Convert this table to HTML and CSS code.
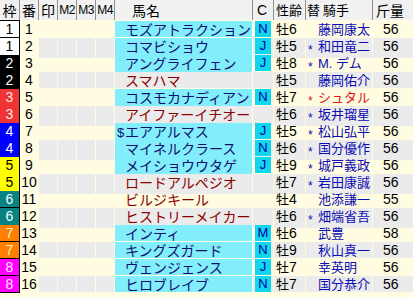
FILE: index.html
```html
<!DOCTYPE html>
<html lang="ja">
<head>
<meta charset="utf-8">
<title>出馬表</title>
<link rel="stylesheet" href="styles.css">
</head>
<body>
<div class="sheet">
  <div class="head">
    <div class="h">枠</div>
    <div class="h">番</div>
    <div class="h">印</div>
    <div class="h m">M2</div>
    <div class="h m">M3</div>
    <div class="h m">M4</div>
    <div class="h h-name">馬名</div>
    <div class="h h-c">C</div>
    <div class="h h-sex">性齢</div>
    <div class="h h-jk">替 騎手</div>
    <div class="h h-wt">斤量</div>
  </div>
  <div class="body">
    <div class="row odd first">
      <div class="waku w1">1</div><div class="num">1</div>
      <div class="mk"></div><div class="mk"></div><div class="mk"></div><div class="mk"></div>
      <div class="name cyan"><span class="pre"></span>モズアトラクション</div>
      <div class="c"><span class="badge">N</span></div>
      <div class="sex">牡<span class="d">6</span></div>
      <div class="jk"><span class="pre"></span>藤岡康太</div>
      <div class="wt">56</div>
    </div>
    <div class="row even">
      <div class="waku w1">1</div><div class="num">2</div>
      <div class="mk"></div><div class="mk"></div><div class="mk"></div><div class="mk"></div>
      <div class="name cyan"><span class="pre"></span>コマビショウ</div>
      <div class="c"><span class="badge">J</span></div>
      <div class="sex">牡<span class="d">5</span></div>
      <div class="jk"><span class="pre">*</span>和田竜二</div>
      <div class="wt">56</div>
    </div>
    <div class="row odd">
      <div class="waku w2">2</div><div class="num">3</div>
      <div class="mk"></div><div class="mk"></div><div class="mk"></div><div class="mk"></div>
      <div class="name cyan"><span class="pre"></span>アングライフェン</div>
      <div class="c"><span class="badge">J</span></div>
      <div class="sex">牡<span class="d">8</span></div>
      <div class="jk"><span class="pre">*</span><span class="lat">M. </span>デム</div>
      <div class="wt">56</div>
    </div>
    <div class="row even">
      <div class="waku w2">2</div><div class="num">4</div>
      <div class="mk"></div><div class="mk"></div><div class="mk"></div><div class="mk"></div>
      <div class="name red"><span class="pre"></span>スマハマ</div>
      <div class="c"></div>
      <div class="sex">牡<span class="d">5</span></div>
      <div class="jk"><span class="pre"></span>藤岡佑介</div>
      <div class="wt">56</div>
    </div>
    <div class="row odd">
      <div class="waku w3">3</div><div class="num">5</div>
      <div class="mk"></div><div class="mk"></div><div class="mk"></div><div class="mk"></div>
      <div class="name cyan"><span class="pre"></span>コスモカナディアン</div>
      <div class="c"><span class="badge">N</span></div>
      <div class="sex">牡<span class="d">7</span></div>
      <div class="jk alert"><span class="pre">*</span>シュタル</div>
      <div class="wt">56</div>
    </div>
    <div class="row even">
      <div class="waku w3">3</div><div class="num">6</div>
      <div class="mk"></div><div class="mk"></div><div class="mk"></div><div class="mk"></div>
      <div class="name red"><span class="pre"></span>アイファーイチオー</div>
      <div class="c"></div>
      <div class="sex">牡<span class="d">6</span></div>
      <div class="jk"><span class="pre">*</span>坂井瑠星</div>
      <div class="wt">56</div>
    </div>
    <div class="row odd">
      <div class="waku w4">4</div><div class="num">7</div>
      <div class="mk"></div><div class="mk"></div><div class="mk"></div><div class="mk"></div>
      <div class="name cyan"><span class="pre">$</span>エアアルマス</div>
      <div class="c"><span class="badge">J</span></div>
      <div class="sex">牡<span class="d">5</span></div>
      <div class="jk"><span class="pre">*</span>松山弘平</div>
      <div class="wt">56</div>
    </div>
    <div class="row even">
      <div class="waku w4">4</div><div class="num">8</div>
      <div class="mk"></div><div class="mk"></div><div class="mk"></div><div class="mk"></div>
      <div class="name cyan"><span class="pre"></span>マイネルクラース</div>
      <div class="c"><span class="badge">N</span></div>
      <div class="sex">牡<span class="d">6</span></div>
      <div class="jk"><span class="pre">*</span>国分優作</div>
      <div class="wt">56</div>
    </div>
    <div class="row odd">
      <div class="waku w5">5</div><div class="num">9</div>
      <div class="mk"></div><div class="mk"></div><div class="mk"></div><div class="mk"></div>
      <div class="name cyan"><span class="pre"></span>メイショウウタゲ</div>
      <div class="c"><span class="badge">J</span></div>
      <div class="sex">牡<span class="d">9</span></div>
      <div class="jk"><span class="pre">*</span>城戸義政</div>
      <div class="wt">56</div>
    </div>
    <div class="row even">
      <div class="waku w5">5</div><div class="num">10</div>
      <div class="mk"></div><div class="mk"></div><div class="mk"></div><div class="mk"></div>
      <div class="name red"><span class="pre"></span>ロードアルペジオ</div>
      <div class="c"></div>
      <div class="sex">牡<span class="d">7</span></div>
      <div class="jk"><span class="pre">*</span>岩田康誠</div>
      <div class="wt">56</div>
    </div>
    <div class="row odd">
      <div class="waku w6">6</div><div class="num">11</div>
      <div class="mk"></div><div class="mk"></div><div class="mk"></div><div class="mk"></div>
      <div class="name red"><span class="pre"></span>ビルジキール</div>
      <div class="c"></div>
      <div class="sex">牡<span class="d">4</span></div>
      <div class="jk"><span class="pre"></span>池添謙一</div>
      <div class="wt">55</div>
    </div>
    <div class="row even">
      <div class="waku w6">6</div><div class="num">12</div>
      <div class="mk"></div><div class="mk"></div><div class="mk"></div><div class="mk"></div>
      <div class="name red"><span class="pre"></span>ヒストリーメイカー</div>
      <div class="c"></div>
      <div class="sex">牡<span class="d">6</span></div>
      <div class="jk"><span class="pre">*</span>畑端省吾</div>
      <div class="wt">56</div>
    </div>
    <div class="row odd">
      <div class="waku w7">7</div><div class="num">13</div>
      <div class="mk"></div><div class="mk"></div><div class="mk"></div><div class="mk"></div>
      <div class="name cyan"><span class="pre"></span>インティ</div>
      <div class="c"><span class="badge">M</span></div>
      <div class="sex">牡<span class="d">6</span></div>
      <div class="jk"><span class="pre"></span>武豊</div>
      <div class="wt">58</div>
    </div>
    <div class="row even">
      <div class="waku w7">7</div><div class="num">14</div>
      <div class="mk"></div><div class="mk"></div><div class="mk"></div><div class="mk"></div>
      <div class="name cyan"><span class="pre"></span>キングズガード</div>
      <div class="c"><span class="badge">N</span></div>
      <div class="sex">牡<span class="d">9</span></div>
      <div class="jk"><span class="pre"></span>秋山真一</div>
      <div class="wt">56</div>
    </div>
    <div class="row odd">
      <div class="waku w8">8</div><div class="num">15</div>
      <div class="mk"></div><div class="mk"></div><div class="mk"></div><div class="mk"></div>
      <div class="name cyan"><span class="pre"></span>ヴェンジェンス</div>
      <div class="c"><span class="badge">J</span></div>
      <div class="sex">牡<span class="d">7</span></div>
      <div class="jk"><span class="pre"></span>幸英明</div>
      <div class="wt">56</div>
    </div>
    <div class="row even">
      <div class="waku w8">8</div><div class="num">16</div>
      <div class="mk"></div><div class="mk"></div><div class="mk"></div><div class="mk"></div>
      <div class="name cyan"><span class="pre"></span>ヒロブレイブ</div>
      <div class="c"><span class="badge">N</span></div>
      <div class="sex">牡<span class="d">7</span></div>
      <div class="jk"><span class="pre"></span>国分恭介</div>
      <div class="wt">56</div>
    </div>
  </div>
</div>
</body>
</html>
```
FILE: styles.css
```css
html, body {
  margin: 0;
  padding: 0;
}
body {
  background: #fffce1;
  width: 413px;
  height: 297px;
  overflow: hidden;
  font-family: "Noto Sans CJK JP", sans-serif;
  color: #000;
}
.sheet {
  width: 413px;
}
.head,
.row {
  display: grid;
  grid-template-columns: 19px 18px 18px 18px 18px 18px 137px 20px 31px 66px 40px;
  column-gap: 1px;
}
.head {
  height: 20px;
  background: #8e8e8e;
}
.h {
  background: #f1f1f1;
  font-size: 14px;
  line-height: 20px;
  text-align: center;
  white-space: nowrap;
}
.h.m {
  font-family: "Liberation Sans Narrow", "Liberation Sans", sans-serif;
  font-size: 12px;
  letter-spacing: -0.5px;
}
.h-name {
  text-align: left;
  padding-left: 17px;
}
.h-c {
  font-family: "Liberation Sans", sans-serif;
  font-size: 14px;
  text-align: left;
  padding-left: 4px;
}
.h-sex {
  text-align: left;
  padding-left: 2px;
  font-size: 13px;
}
.h-jk {
  text-align: left;
  padding-left: 1px;
  font-size: 13px;
}
.h-wt {
  text-align: left;
  padding-left: 3px;
}
.body {
  display: grid;
  row-gap: 1px;
  padding-top: 1px;
}
.row {
  height: 16px;
  line-height: 16px;
  white-space: nowrap;
}
.waku {
  text-align: center;
  font-family: "Liberation Sans Narrow", "Liberation Sans", sans-serif;
  font-size: 14px;
  box-shadow: 1px 0 0 #000, 0 1px 0 #000, 1px 1px 0 #000;
}
.first .waku {
  box-shadow: 1px 0 0 #000, 0 1px 0 #000, 1px 1px 0 #000, 0 -1px 0 #000, 1px -1px 0 #000;
}
.w1 { background: #ffffff; color: #000; }
.w2 { background: #000000; color: #fff; }
.w3 { background: #f03434; color: #ffe4e4; }
.w4 { background: #0000ff; color: #fff; }
.w5 { background: #ffff00; color: #000; }
.w6 { background: #0a8282; color: #e6ffff; }
.w7 { background: #ff8000; color: #fff4c8; }
.w8 { background: #ff00ff; color: #ffe6ff; }
.num {
  text-align: center;
  font-family: "Liberation Sans Narrow", "Liberation Sans", sans-serif;
  font-size: 14px;
}
.name {
  font-size: 14px;
  padding-left: 2px;
}
.name .pre {
  display: inline-block;
  width: 8px;
  font-family: "Liberation Sans", sans-serif;
  font-size: 13px;
}
.name.cyan {
  background: #82eefb;
  color: #101070;
}
.name.red {
  color: #8c0000;
}
.c {
  padding-left: 2px;
}
.badge {
  display: block;
  width: 16px;
  height: 16px;
  background: #12d6ee;
  color: #0000a0;
  text-align: center;
  font-family: "Liberation Sans", sans-serif;
  font-size: 13px;
}
.sex {
  padding-left: 2px;
  font-size: 13px;
}
.sex .d,
.wt {
  font-family: "Liberation Sans Narrow", "Liberation Sans", sans-serif;
  font-size: 14px;
}
.jk {
  padding-left: 2px;
  font-size: 13px;
  color: #0c0cb4;
}
.jk .pre {
  display: inline-block;
  width: 10px;
  font-family: "Liberation Sans", sans-serif;
  font-size: 12px;
  vertical-align: -3px;
}
.jk .lat {
  font-family: "Liberation Sans", sans-serif;
  font-size: 13px;
  white-space: pre;
}
.jk.alert {
  color: #e01414;
}
.wt {
  padding-left: 10px;
}
.even .mk,
.even .name.red,
.even .c,
.even .sex,
.even .jk,
.even .wt {
  background: #ebebeb;
}
```
